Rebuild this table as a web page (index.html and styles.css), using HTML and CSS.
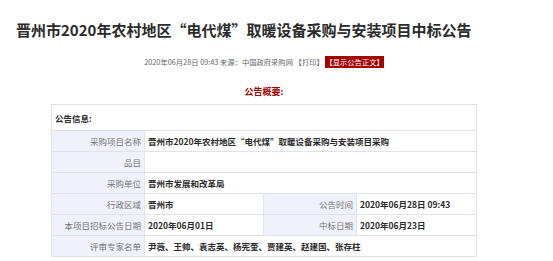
FILE: index.html
```html
<!DOCTYPE html>
<html lang="zh-CN">
<head>
  <meta charset="UTF-8" />
  <title>晋州市2020年农村地区“电代煤”取暖设备采购与安装项目中标公告</title>
  <link rel="stylesheet" href="styles.css">
</head>
<body>
  <div class="page">
    <h1 class="title">晋州市2020年农村地区“电代煤”取暖设备采购与安装项目中标公告</h1>

    <p class="meta">
      2020年06月28日 09:43 来源：中国政府采购网 【打印】 <span class="show-text">【显示公告正文】</span>
    </p>

    <h3 class="summary">公告概要:</h3>

    <table class="info">
      <tr>
        <td class="head" colspan="4">公告信息:</td>
      </tr>
      <tr>
        <td class="label">采购项目名称</td>
        <td class="value" colspan="3">晋州市2020年农村地区“电代煤”取暖设备采购与安装项目采购</td>
      </tr>
      <tr>
        <td class="label">品目</td>
        <td class="value" colspan="3"></td>
      </tr>
      <tr>
        <td class="label">采购单位</td>
        <td class="value" colspan="3">晋州市发展和改革局</td>
      </tr>
      <tr>
        <td class="label">行政区域</td>
        <td class="value mid">晋州市</td>
        <td class="label mid">公告时间</td>
        <td class="value">2020年06月28日 09:43</td>
      </tr>
      <tr>
        <td class="label">本项目招标公告日期</td>
        <td class="value mid">2020年06月01日</td>
        <td class="label mid">中标日期</td>
        <td class="value">2020年06月23日</td>
      </tr>
      <tr>
        <td class="label">评审专家名单</td>
        <td class="value" colspan="3">尹薇、王帅、袁志英、杨宪奎、贾建英、赵建国、张存柱</td>
      </tr>
    </table>
  </div>
</body>
</html>
```

FILE: styles.css
```css
body {
  margin: 0;
  font-family: "Noto Sans CJK SC", "Noto Sans", sans-serif;
  color: #333;
  background: #fff;
}
.page {
  width: 496px;
  padding: 0 0 0 16px;
}
.title {
  margin: 0;
  padding-top: 19px;
  font-size: 15px;
  line-height: 22px;
  font-weight: bold;
  color: #2b2b2b;
  white-space: nowrap;
}
.meta {
  margin: 16px 0 0;
  text-align: center;
  font-size: 7.3px;
  line-height: 10px;
  color: #666;
}
.show-text {
  background: #a50000;
  color: #fff;
  padding: 1px 0;
}
.summary {
  margin: 19px 0 0;
  text-align: center;
  font-size: 9px;
  line-height: 12px;
  color: #a00000;
}
.info {
  margin: 6px 0 0 35px;
  width: 426px;
  border-collapse: collapse;
  font-size: 8.5px;
}
.info td {
  border: 1px solid #e0e3ea;
  height: 20px;
  padding: 0 3px;
  white-space: nowrap;
}
.info .head {
  height: 25px;
  font-weight: bold;
  color: #2b2b2b;
}
.label {
  width: 86px;
  text-align: right;
  background: #eff2fa;
  color: #777;
}
.value {
  font-weight: bold;
  color: #2b2b2b;
}
.value.mid {
  width: 112px;
}
```
